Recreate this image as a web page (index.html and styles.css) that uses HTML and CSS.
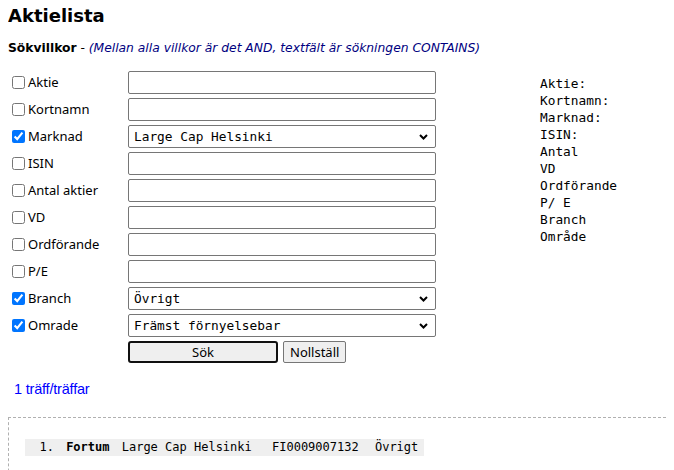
FILE: index.html
```html
<!DOCTYPE html>
<html lang="sv">
<head>
<meta charset="utf-8">
<title>Aktielista</title>
<link rel="stylesheet" href="styles.css">
</head>
<body>
<h1 class="title">Aktielista</h1>
<p class="criteria"><b class="criteria-label">Sökvillkor</b> - <i class="note">(Mellan alla villkor är det AND, textfält är sökningen CONTAINS)</i></p>
<div class="search">
  <form class="fields">
    <label class="field-label"><input type="checkbox" class="check">Aktie</label>
    <input type="text" class="text-input">
    <label class="field-label"><input type="checkbox" class="check">Kortnamn</label>
    <input type="text" class="text-input">
    <label class="field-label"><input type="checkbox" class="check" checked>Marknad</label>
    <select class="select-input"><option>Large Cap Helsinki</option></select>
    <label class="field-label"><input type="checkbox" class="check">ISIN</label>
    <input type="text" class="text-input">
    <label class="field-label"><input type="checkbox" class="check">Antal aktier</label>
    <input type="text" class="text-input">
    <label class="field-label"><input type="checkbox" class="check">VD</label>
    <input type="text" class="text-input">
    <label class="field-label"><input type="checkbox" class="check">Ordförande</label>
    <input type="text" class="text-input">
    <label class="field-label"><input type="checkbox" class="check">P/E</label>
    <input type="text" class="text-input">
    <label class="field-label"><input type="checkbox" class="check" checked>Branch</label>
    <select class="select-input"><option>Övrigt</option></select>
    <label class="field-label"><input type="checkbox" class="check" checked>Omrade</label>
    <select class="select-input"><option>Främst förnyelsebar</option></select>
    <div class="actions">
      <button type="button" class="btn btn-primary">Sök</button>
      <button type="button" class="btn">Nollställ</button>
    </div>
  </form>
  <pre class="summary">Aktie:
Kortnamn:
Marknad:
ISIN:
Antal
VD
Ordförande
P/ E
Branch
Område</pre>
</div>
<p class="hits">1 träff/träffar</p>
<div class="results">
  <pre class="result-row"><span class="num">  1. </span><b class="name">Fortum</b> <span class="market">Large Cap Helsinki</span> <span class="isin">FI0009007132</span> <span class="branch">Övrigt</span></pre>
</div>
</body>
</html>
```

FILE: styles.css
```css
html {
  overflow: hidden;
}

body {
  margin: 4px 8px 8px;
  background: #ffffff;
  color: #000000;
  font-family: "Noto Sans", sans-serif;
}

.title {
  margin: 0;
  font-family: "DejaVu Sans", sans-serif;
  font-size: 18px;
  font-weight: bold;
  line-height: 24px;
}

.criteria {
  margin: 12px 0 0;
  font-family: "DejaVu Sans", sans-serif;
  font-size: 12.3px;
  line-height: 16px;
}

.criteria-label {
  font-weight: bold;
}

.note {
  color: #000080;
}

.search {
  display: flex;
  align-items: flex-start;
  margin-top: 15px;
}

.fields {
  display: grid;
  grid-template-columns: 120px 308px;
  grid-auto-rows: 23px;
  row-gap: 4px;
  margin: 0;
}

.field-label {
  display: flex;
  align-items: center;
  font-size: 13px;
  line-height: 23px;
  white-space: nowrap;
}

.check {
  margin: 0 3px 0 4px;
  width: 13px;
  height: 13px;
}

.text-input,
.select-input {
  box-sizing: border-box;
  width: 308px;
  height: 23px;
  margin: 0;
  border: 1px solid #767676;
  border-radius: 2px;
  background-color: #ffffff;
}

.select-input {
  appearance: none;
  -webkit-appearance: none;
  padding: 0 24px 0 5px;
  font-family: "DejaVu Sans Mono", monospace;
  font-size: 12.8px;
  color: #000000;
  background-image: url("data:image/svg+xml;utf8,<svg xmlns='http://www.w3.org/2000/svg' width='9' height='6' viewBox='0 0 9 6'><path d='M1 1 L4.5 4.5 L8 1' fill='none' stroke='black' stroke-width='2'/></svg>");
  background-repeat: no-repeat;
  background-position: right 7px center;
}

.actions {
  grid-column: 2;
  display: flex;
  gap: 5px;
}

.btn {
  box-sizing: border-box;
  height: 22px;
  margin: 0;
  padding: 0 6px;
  border: 1px solid #767676;
  border-radius: 2px;
  background: #efefef;
  font-family: "Noto Sans", sans-serif;
  font-size: 13px;
  color: #000000;
}

.btn-primary {
  width: 150px;
  border: 2px solid #101010;
  border-radius: 3px;
}

.summary {
  margin: 4px 0 0 104px;
  font-family: "DejaVu Sans Mono", monospace;
  font-size: 12.8px;
  line-height: 17px;
}

.hits {
  margin: 17px 0 0;
  padding-left: 6px;
  font-family: "Liberation Sans", sans-serif;
  font-size: 14.5px;
  line-height: 17px;
  letter-spacing: -0.2px;
  color: #0000ff;
}

.results {
  margin: 19px -60px 0 0;
  padding: 16px 16px 30px;
  border: 1px dashed #b0b0b0;
}

.result-row {
  display: inline-block;
  margin: 0;
  padding-right: 6px;
  background: #efefef;
  font-family: "DejaVu Sans Mono", monospace;
  font-size: 12px;
  line-height: 17px;
}

.num {
  margin-right: 5px;
}

.name {
  margin-right: 5px;
}

.market {
  margin-right: 13px;
}

.isin {
  margin-right: 9px;
}
```
